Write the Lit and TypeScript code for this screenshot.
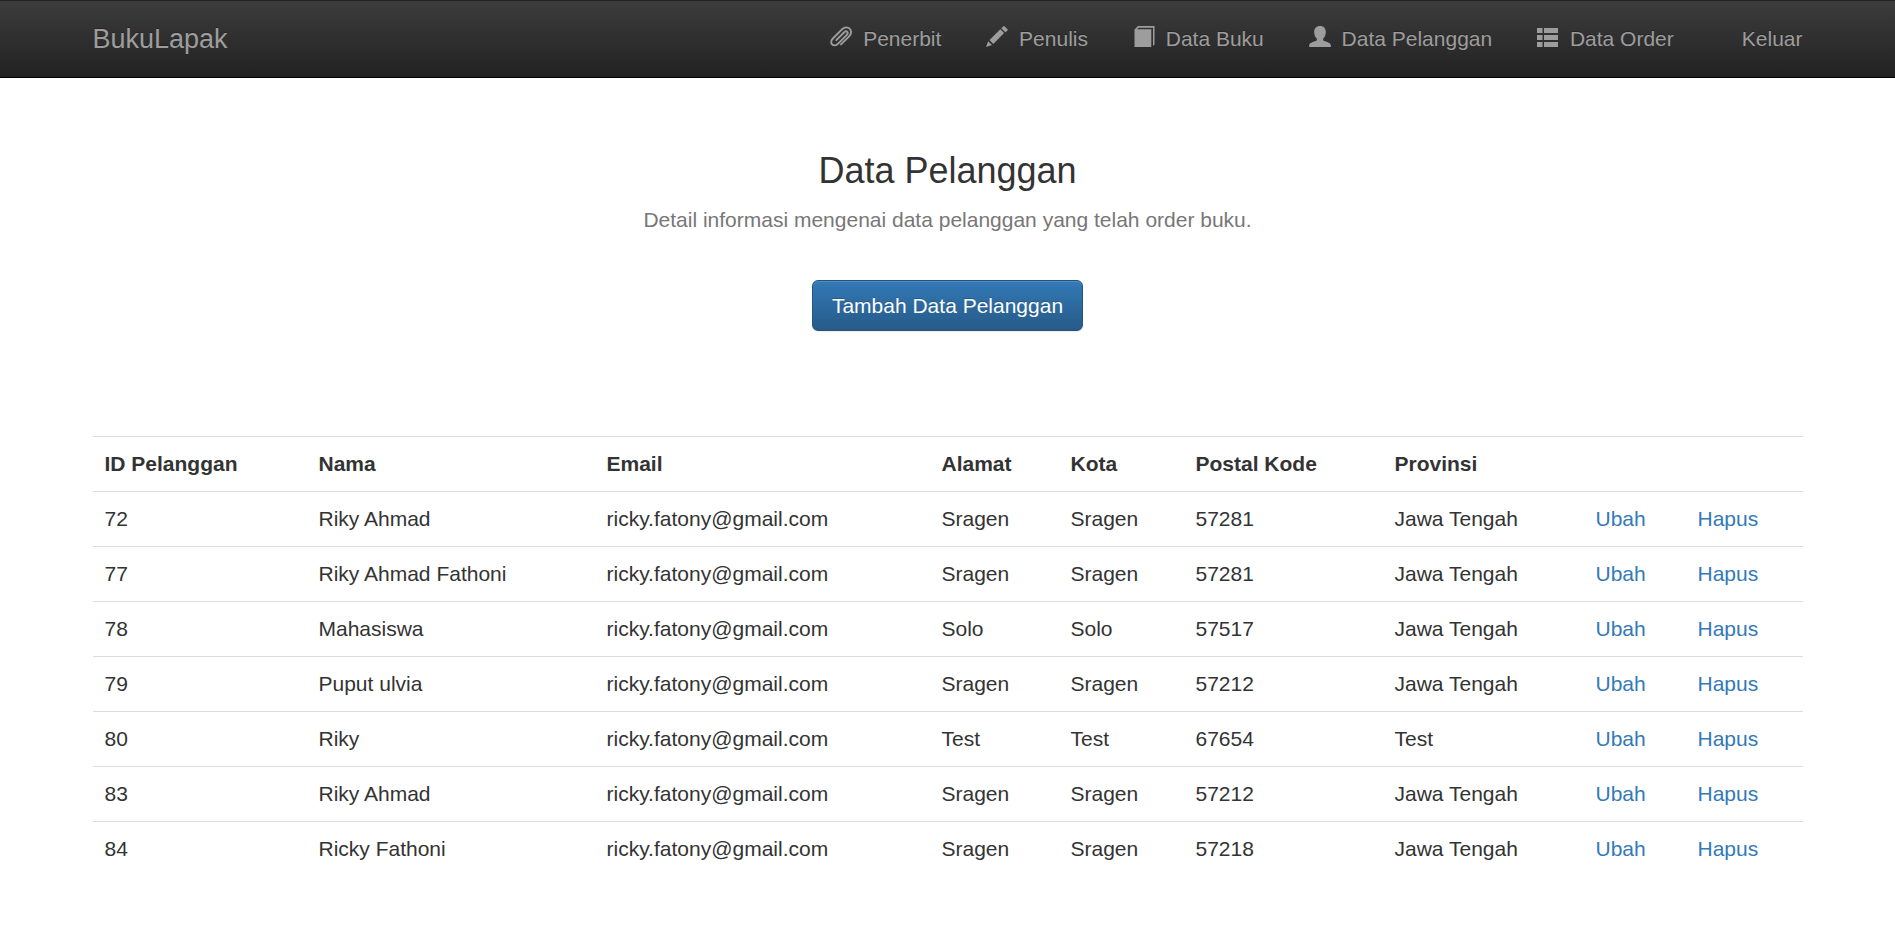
import { LitElement, html, css, svg } from "lit";
import { customElement } from "lit/decorators.js";

const icons: Record<string, unknown> = {
  paperclip: svg`<path fill="none" stroke="currentColor" stroke-width="1.9" stroke-linecap="round" stroke-linejoin="round" d="M11 18.4L18.9 10.6C21 8.5 21.7 5.9 20.4 3.6C18.7 .6 14.6 .8 12.2 3.2L2.9 12.5C1 14.4 .6 17 2.1 18.4C3.6 19.8 6.1 19.6 7.9 17.8L16.6 9.1C17.6 8.1 18 6.7 17.2 5.9C16.4 5.1 15.1 5.4 14 6.5L6.3 14.2"/>`,
  pencil: svg`<path d="M15.3 2.3L17.3 .4Q18 -.2 18.7 .4L21.5 3.2Q22.1 3.8 21.5 4.5L19.3 6.3ZM14.3 3.3L18.1 7.1L7.3 17.9L3.5 14.1ZM2.2 15.3L6 19.1L0 21Z"/>`,
  book: svg`<path d="M5 0H21.5V18.5L20 20V1.7H5.7L4.1 3.2H18.3V21H1.5V3.5Z"/>`,
  user: svg`<path d="M11 0C14.8 0 17 2.6 16.8 6.2C16.7 9 15.7 11.2 14.2 12.6V14.2C15.2 15.4 21.8 16.4 21.8 19V21H0.2V19C0.2 16.4 6.8 15.4 7.8 14.2V12.6C6.3 11.2 5.3 9 5.2 6.2C5 2.6 7.2 0 11 0Z"/>`,
  list: svg`<path d="M0 2H5.5V7H0ZM7 2H21V7H7ZM0 9H5.5V14H0ZM7 9H21V14H7ZM0 16H5.5V21H0ZM7 16H21V21H7Z"/>`,
};

const links = [
  ["Penerbit", "paperclip"],
  ["Penulis", "pencil"],
  ["Data Buku", "book"],
  ["Data Pelanggan", "user"],
  ["Data Order", "list"],
];

const headers = ["ID Pelanggan", "Nama", "Email", "Alamat", "Kota", "Postal Kode", "Provinsi", "", ""];

const mail = "ricky.fatony@gmail.com";
const customers = [
  ["72", "Riky Ahmad", mail, "Sragen", "Sragen", "57281", "Jawa Tengah"],
  ["77", "Riky Ahmad Fathoni", mail, "Sragen", "Sragen", "57281", "Jawa Tengah"],
  ["78", "Mahasiswa", mail, "Solo", "Solo", "57517", "Jawa Tengah"],
  ["79", "Puput ulvia", mail, "Sragen", "Sragen", "57212", "Jawa Tengah"],
  ["80", "Riky", mail, "Test", "Test", "67654", "Test"],
  ["83", "Riky Ahmad", mail, "Sragen", "Sragen", "57212", "Jawa Tengah"],
  ["84", "Ricky Fathoni", mail, "Sragen", "Sragen", "57218", "Jawa Tengah"],
];

@customElement("app-root")
class AppRoot extends LitElement {
  static styles = css`
    :host {
      display: block;
      height: 929px;
      overflow: hidden;
      background: #fff;
      color: #333;
      font: 21px/30px "Liberation Sans", Arial, sans-serif;
    }
    a { color: #337ab7; text-decoration: none; }
    .container { width: 1710px; margin: 0 auto; }
    .navbar {
      height: 78px;
      box-sizing: border-box;
      border-top: 1px solid #222;
      border-bottom: 1px solid #000;
      background: linear-gradient(to bottom, #3c3c3c 0%, #222 100%);
    }
    .bar { display: flex; justify-content: space-between; height: 76px; align-items: center; }
    .navbar a { color: #9d9d9d; text-shadow: 0 -1px 0 rgba(0, 0, 0, 0.25); white-space: nowrap; }
    .brand { font-size: 27px; }
    .nav { display: flex; }
    .nav a { display: flex; align-items: center; margin-left: 45px; }
    .nav a.exit { margin-left: 68px; }
    .icon { width: 22px; height: 21px; margin: -5px 10.75px 0 0; fill: currentColor; overflow: visible; }
    .intro { display: flex; flex-direction: column; align-items: center; padding-top: 73px; height: 285px; }
    h1 { margin: 0; font-size: 36px; line-height: 40px; font-weight: 400; }
    .lead { margin: 14px 0 45px; color: #777; }
    .button {
      box-sizing: border-box;
      height: 51px;
      padding: 9px 19px;
      border: 1px solid #245580;
      border-radius: 6px;
      background: linear-gradient(to bottom, #337ab7 0%, #265a88 100%);
      box-shadow: inset 0 1px 0 rgba(255, 255, 255, 0.15), 0 1px 1px rgba(0, 0, 0, 0.075);
      color: #fff;
      text-shadow: 0 -1px 0 rgba(0, 0, 0, 0.2);
      line-height: 31px;
    }
    .table { display: grid; }
    .row {
      display: grid;
      grid-template-columns: 214px 288px 335px 129px 125px 199px 201px 102px 1fr;
      border-top: 1px solid #ddd;
      height: 54px;
      align-items: center;
    }
    .cell { padding: 0 12px; white-space: nowrap; }
    .head { font-weight: 700; }
  `;

  render() {
    return html`
      <nav class="navbar">
        <div class="container bar">
          <a class="brand">BukuLapak</a>
          <div class="nav">
            ${links.map(
              ([label, icon]) => html`<a><svg class="icon" viewBox="0 0 22 21">${icons[icon]}</svg>${label}</a>`
            )}
            <a class="exit">Keluar</a>
          </div>
        </div>
      </nav>
      <main class="container">
        <section class="intro">
          <h1>Data Pelanggan</h1>
          <p class="lead">Detail informasi mengenai data pelanggan yang telah order buku.</p>
          <a class="button">Tambah Data Pelanggan</a>
        </section>
        <section class="table">
          <div class="row head">${headers.map((h) => html`<div class="cell">${h}</div>`)}</div>
          ${customers.map(
            (c) => html`<div class="row">
              ${c.map((v) => html`<div class="cell">${v}</div>`)}
              <div class="cell"><a>Ubah</a></div>
              <div class="cell"><a>Hapus</a></div>
            </div>`
          )}
        </section>
      </main>
    `;
  }
}
